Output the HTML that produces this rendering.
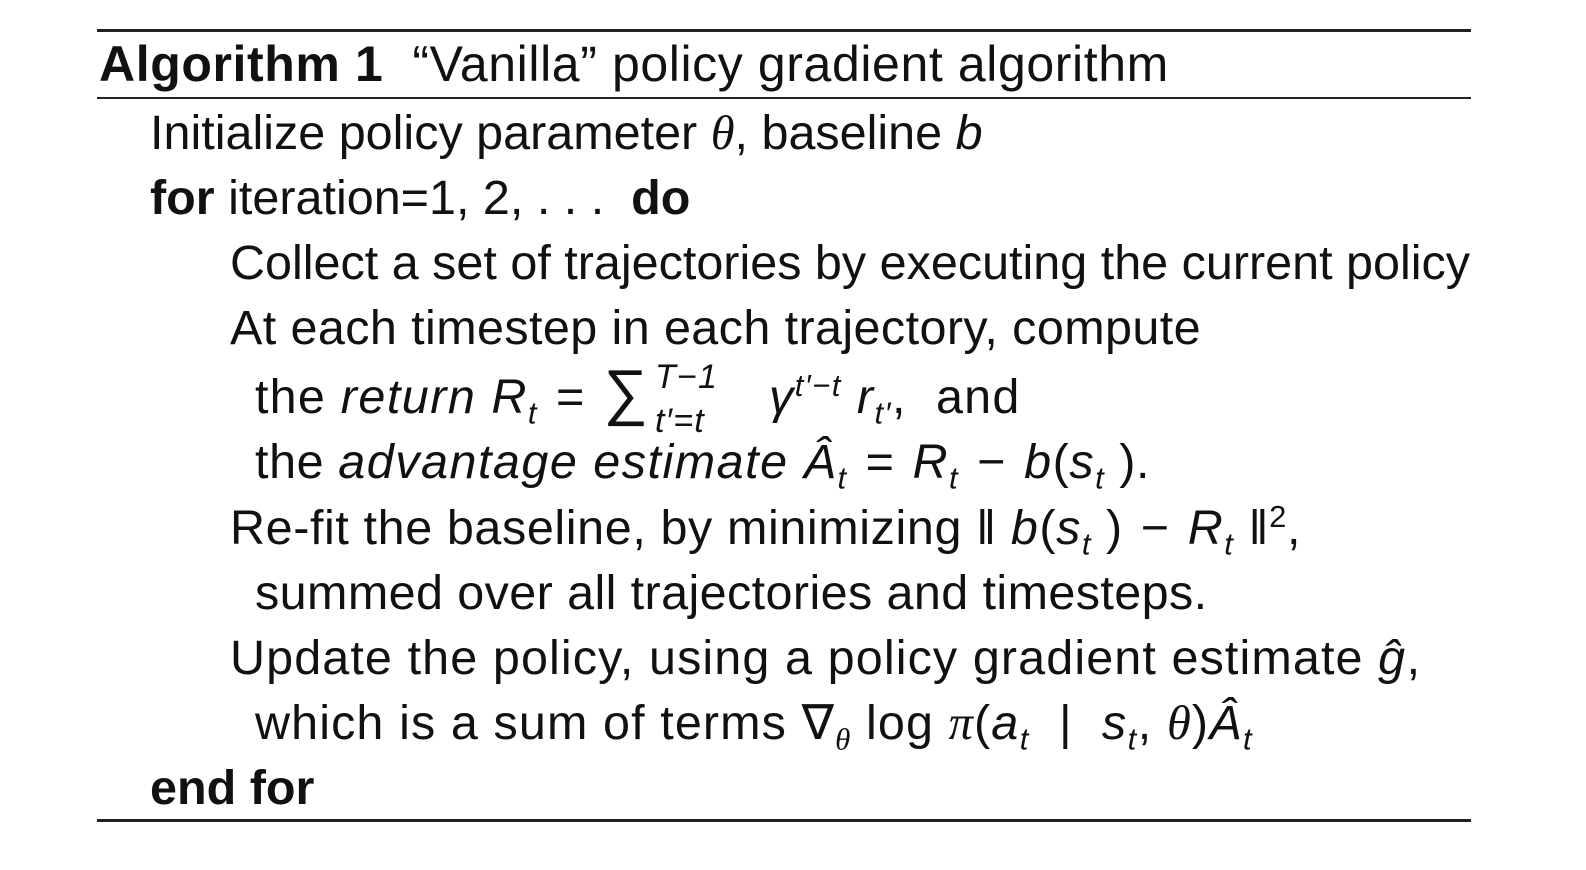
<!DOCTYPE html>
<html><head><meta charset="utf-8"><style>
body{margin:0;width:1586px;height:870px;background:#fff;overflow:hidden;font-family:"Liberation Sans",sans-serif;color:#111;}
.r{position:absolute;left:97px;width:1374px;background:#222;}
.l{position:absolute;white-space:nowrap;font-size:48.5px;line-height:60px;letter-spacing:0px}
b{font-weight:bold}
i{font-style:italic;letter-spacing:1.5px}
sub,sup{font-size:31px;line-height:0}
.m{font-family:"Liberation Serif",serif;font-style:italic}
.op{display:inline-block;margin:0 18px}
.lim{display:inline-block;position:relative;width:120px;height:40px;vertical-align:middle;font-size:34px;font-style:italic}
.lim span{position:absolute;left:6px;line-height:1}
</style></head><body>
<div class="r" style="top:29px;height:3px"></div>
<div class="r" style="top:97px;height:2px"></div>
<div class="r" style="top:819px;height:3px"></div>
<div class="l" style="left:99px;top:34px;font-size:50px;letter-spacing:0.6px"><b>Algorithm 1</b> &nbsp;“Vanilla” policy gradient algorithm</div>
<div class="l" style="left:150px;top:103px">Initialize policy parameter <span class="m">θ</span>, baseline <i>b</i></div>
<div class="l" style="left:150px;top:168px"><b>for</b> iteration=1, 2, . . . &nbsp;<b>do</b></div>
<div class="l" style="left:230px;top:233px">Collect a set of trajectories by executing the current policy</div>
<div class="l" style="left:230px;top:298px;letter-spacing:0.4px">At each timestep in each trajectory, compute</div>
<div class="l" style="left:255px;top:363px;letter-spacing:1.2px">the <i>return R<sub>t</sub></i><span class="op">=</span><span style="font-size:62px">∑</span><span class="lim"><span style="top:-20px">T−1</span><span style="top:24px">t′=t</span></span><i>γ<sup>t′−t</sup>&nbsp;r<sub>t′</sub></i>, &nbsp;and</div>
<div class="l" style="left:255px;top:432px;letter-spacing:0.6px">the <i>advantage estimate Â<sub>t</sub></i><span class="op">=</span><i>R<sub>t</sub></i><span class="op">−</span><i>b</i>(<i>s<sub>t</sub></i> ).</div>
<div class="l" style="left:230px;top:498px;letter-spacing:0.6px">Re-fit the baseline, by minimizing ‖ <i>b</i>(<i>s<sub>t</sub></i> )<span class="op">−</span><i>R<sub>t</sub></i> ‖<sup>2</sup>,</div>
<div class="l" style="left:255px;top:563px;letter-spacing:0.4px">summed over all trajectories and timesteps.</div>
<div class="l" style="left:230px;top:628px;letter-spacing:1.1px">Update the policy, using a policy gradient estimate <i>ĝ</i>,</div>
<div class="l" style="left:255px;top:693px;letter-spacing:1.1px">which is a sum of terms ∇<sub><span class="m">θ</span></sub> log <span class="m">π</span>(<i>a<sub>t</sub></i> &nbsp;| &nbsp;<i>s<sub>t</sub></i>, <span class="m">θ</span>)<i>Â<sub>t</sub></i></div>
<div class="l" style="left:150px;top:758px"><b>end for</b></div>
</body></html>
